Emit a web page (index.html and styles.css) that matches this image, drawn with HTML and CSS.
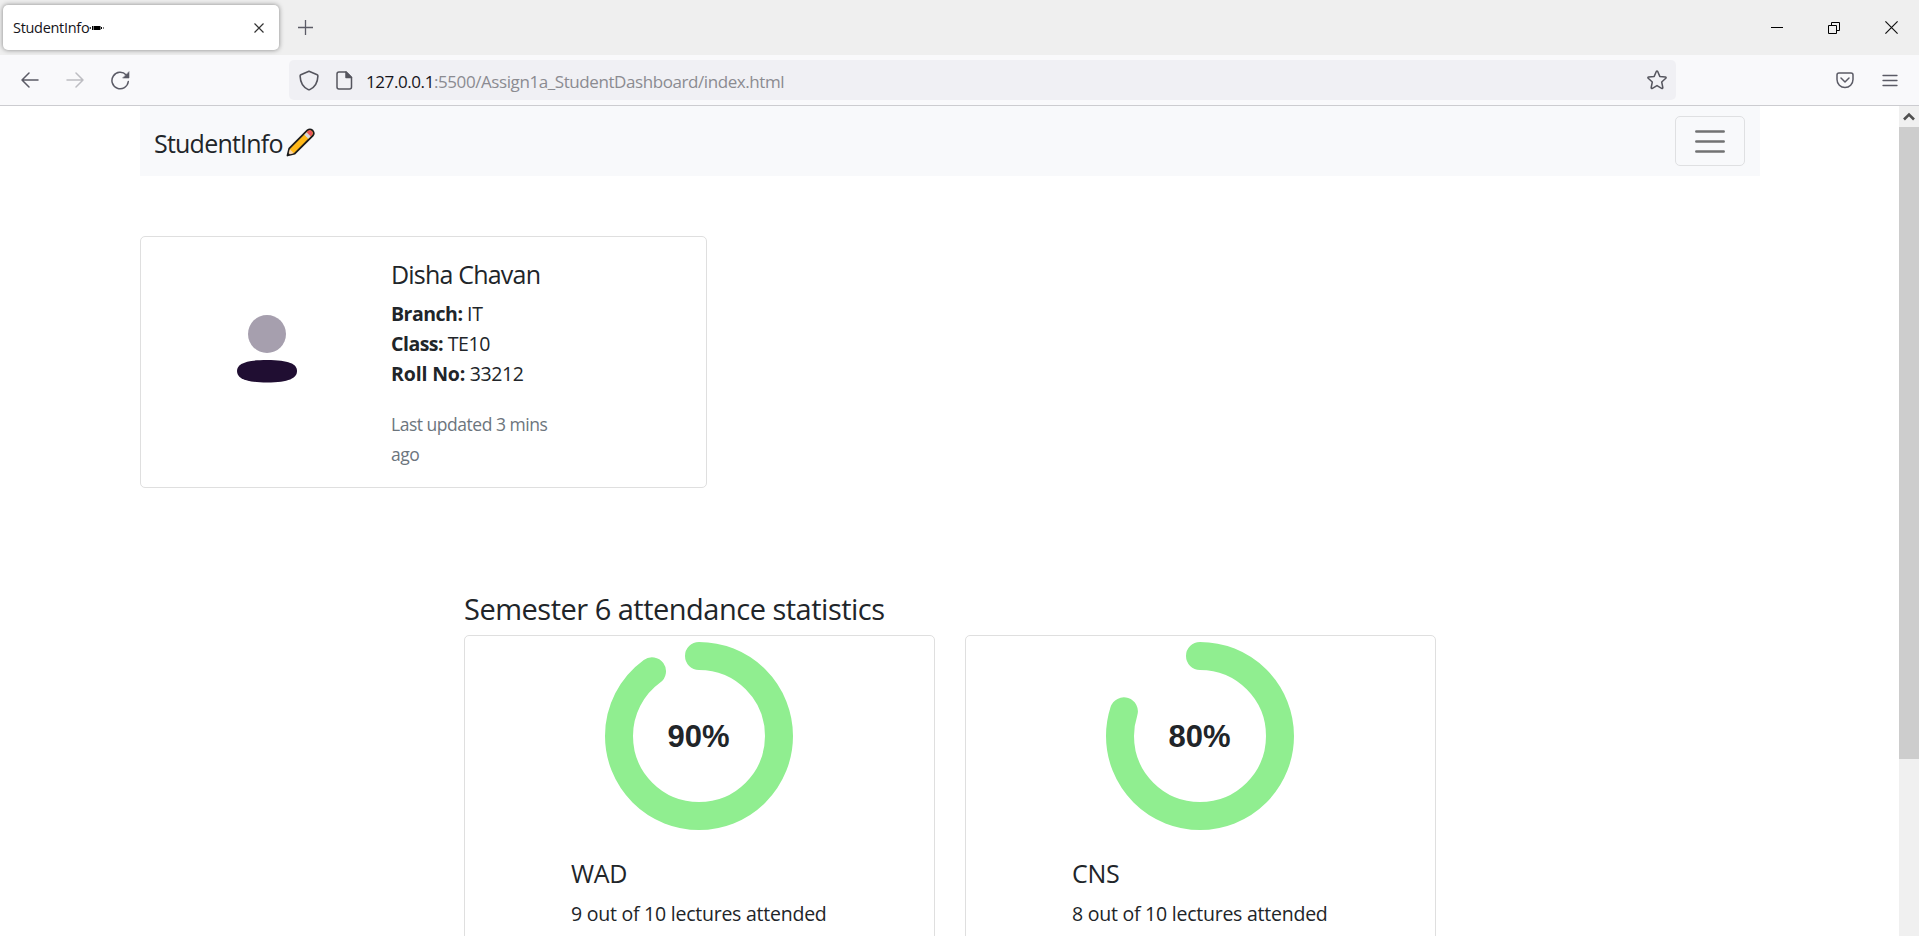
FILE: index.html
```html
<!DOCTYPE html>
<html lang="en">
<head>
<meta charset="utf-8">
<title>StudentInfo</title>
<link rel="stylesheet" href="styles.css">
</head>
<body>
<div class="tabstrip">
  <div class="tab">
    <span class="tab-title">StudentInfo</span>
    <svg class="tab-glyph" width="15" height="6" viewBox="0 0 15 6"><path d="M0 3l2-1v2zM3 1h1v4H3zM4.500 1h7v4h-7zM12 2h1v2h-1zM14 2.500h1v1h-1z"/></svg>
    <svg class="tab-close" width="10" height="10" viewBox="0 0 10 10"><path d="M.5.5l9 9M9.500.5l-9 9" stroke="#333" stroke-width="1.200"/></svg>
  </div>
  <svg class="newtab" width="15" height="15" viewBox="0 0 15 15"><path d="M7.500 0v15M0 7.500h15" stroke="#5b5b66" stroke-width="1.300"/></svg>
  <div class="window-buttons">
    <svg width="12" height="12" viewBox="0 0 12 12"><path d="M0 5.500h12" stroke="#000"/></svg>
    <svg width="12" height="12" viewBox="0 0 12 12" fill="none" stroke="#000"><path d="M.5 3.500h8v8h-8zM3.500 3V.5h8v8H9"/></svg>
    <svg width="13" height="13" viewBox="0 0 13 13"><path d="M.4.4l12.200 12.200M12.600.4L.4 12.600" stroke="#111" stroke-width="1.200"/></svg>
  </div>
</div>
<div class="toolbar">
  <div class="nav-icons">
    <svg width="18" height="16" viewBox="0 0 18 16" fill="none" stroke="#5b5b66" stroke-width="1.500" stroke-linecap="round" stroke-linejoin="round"><path d="M17 8H1M8 1L1 8l7 7"/></svg>
    <svg width="18" height="16" viewBox="0 0 18 16" fill="none" stroke="#bdbdc2" stroke-width="1.500" stroke-linecap="round" stroke-linejoin="round"><path d="M1 8h16M10 1l7 7-7 7"/></svg>
    <svg width="19" height="19" viewBox="0 0 19 19" fill="none" stroke="#5b5b66" stroke-width="1.500" stroke-linecap="round"><path d="M17.300 10.500A8.200 8.200 0 1 1 15.200 4"/><path d="M18 1v6h-6z" fill="#5b5b66" stroke-width=".6" stroke-linejoin="round"/></svg>
  </div>
  <div class="urlbar">
    <svg class="shield" width="20" height="21" viewBox="0 0 20 21" fill="none" stroke="#55555e" stroke-width="1.600" stroke-linejoin="round"><path d="M10 1.200L1.800 4.800q-.7.300-.7 1.200c.2 6 3 11.200 8.100 13.600q.8.300 1.600 0c5.100-2.400 7.900-7.600 8.100-13.600q0-.9-.7-1.200z"/></svg>
    <svg class="page" width="17" height="19" viewBox="0 0 17 19" fill="none" stroke="#55555e" stroke-width="1.500" stroke-linejoin="round"><path d="M10 1H3Q1 1 1 3v13q0 2 2 2h10.500q2 0 2-2V6.500z"/><path d="M10 1v5.500h5.500z" fill="#55555e"/></svg>
    <div class="url"><span class="host">127.0.0.1</span><span class="path">:5500/Assign1a_StudentDashboard/index.html</span></div>
    <svg class="star" width="20" height="20" viewBox="0 0 20 20" fill="none" stroke="#55555e" stroke-width="1.500" stroke-linejoin="round"><path d="M9.300 1.500q.7-1.200 1.400 0l2.100 4.900 5.500.6q1.300.3.500 1.300l-4.100 3.700 1.100 5.500q.1 1.400-1.200.8L10 15.600l-4.600 2.700q-1.300.6-1.200-.8l1.100-5.500-4.100-3.700q-.8-1 .5-1.300l5.500-.6z"/></svg>
  </div>
  <div class="tool-icons">
    <svg width="18" height="17" viewBox="0 0 18 17" fill="none" stroke="#5b5b66" stroke-width="1.500" stroke-linecap="round" stroke-linejoin="round"><path d="M3 1h12q2 0 2 2v4.500a8 8 0 0 1-16 0V3q0-2 2-2z"/><path d="M5 6l4 4 4-4"/></svg>
    <svg width="16" height="13" viewBox="0 0 16 13" stroke="#5b5b66" stroke-width="1.300" stroke-linecap="round"><path d="M1 1.500h14M1 6.500h14M1 11.500h14"/></svg>
  </div>
</div>
<div class="viewport">
  <main class="container">
    <nav class="navbar">
      <div class="brand"><span class="brand-text">StudentInfo</span>
        <svg width="29" height="29" viewBox="0 0 29 29"><path d="M1.500 27.500l1.800-7.200L21.500 2.200Q24 .3 26.600 2.500 28.800 5 26.900 7.500L8.700 25.700z" fill="#ffb91a" stroke="#1b1b1b" stroke-width="1.800" stroke-linejoin="round"/><path d="M2.300 26.700l1.500-5.500 4 4z" fill="#f5d3ae"/><path d="M1.500 27.500l.7-2.700 2 2z" fill="#1b1b1b"/><path d="M18.300 6.700l2.400-2.400 4 4-2.400 2.400z" fill="#d7d9dd"/><path d="M20.700 4.300L22 3q2-1.400 3.900.3 1.500 1.800.2 3.600l-1.400 1.400z" fill="#e8555f"/></svg>
      </div>
      <div class="toggler"><svg width="30" height="23" viewBox="0 0 30 23" stroke="#717273" stroke-width="2.500" stroke-linecap="round"><path d="M1.300 1.500h27.400M1.300 11.500h27.400M1.300 21.500h27.400"/></svg></div>
    </nav>
    <section class="profile">
      <div class="avatar"><svg width="60" height="68" viewBox="0 0 60 68"><circle cx="30" cy="19" r="19" fill="#a69fae"/><path d="M0 56C0 49 8 45 30 45s30 4 30 11-8 11.500-30 11.500S0 63 0 56z" fill="#200e32"/></svg></div>
      <div class="details">
        <h5 class="name">Disha Chavan</h5>
        <p class="facts"><b class="wide-key">Branch:</b> IT<br><b class="wide-key">Class:</b> TE10<br><b class="roll-key">Roll No:</b> 33212</p>
        <p class="updated">Last updated 3 mins<br>ago</p>
      </div>
    </section>
    <section class="stats">
      <h3 class="stats-title">Semester 6 attendance statistics</h3>
      <div class="cards">
        <article class="card">
          <svg class="ring" width="200" height="200" viewBox="0 0 200 200"><circle cx="100" cy="100" r="80" pathLength="100" stroke-dasharray="90 100" transform="rotate(-90 100 100)"/><text x="99.500" y="110.700">90%</text></svg>
          <div class="card-body"><h5 class="subject">WAD</h5><p class="attended">9 out of 10 lectures attended</p></div>
        </article>
        <article class="card">
          <svg class="ring" width="200" height="200" viewBox="0 0 200 200"><circle cx="100" cy="100" r="80" pathLength="100" stroke-dasharray="80 100" transform="rotate(-90 100 100)"/><text x="99.500" y="110.700">80%</text></svg>
          <div class="card-body"><h5 class="subject">CNS</h5><p class="attended">8 out of 10 lectures attended</p></div>
        </article>
      </div>
    </section>
  </main>
  <div class="scrollbar">
    <div class="scroll-up"><svg width="12" height="9" viewBox="0 0 12 9"><path d="M1 7.500l5-5 5 5" fill="none" stroke="#505050" stroke-width="2.600"/></svg></div>
    <div class="thumb"></div>
  </div>
</div>
</body>
</html>
```
FILE: styles.css
```css
* { box-sizing: border-box; }
html, body { margin: 0; height: 936px; overflow: hidden; }
body { display: flex; flex-direction: column; font-family: "Open Sans", "Noto Sans", sans-serif; font-size: 20px; line-height: 30px; color: #212529; background: #fff; }
svg { display: block; flex: none; }
h3, h5, p { margin: 0; font-weight: 400; white-space: nowrap; }

.tabstrip { flex: none; height: 55px; background: #efefef; display: flex; align-items: flex-start; padding: 5px 0 0 3px; }
.tab { width: 276px; height: 45px; background: #fff; border-radius: 5px; box-shadow: 0 0 5px rgba(0,0,0,.45); display: flex; align-items: center; padding: 0 15px 0 10px; }
.tab-title { font-size: 14.500px; color: #15141a; letter-spacing: -.3px; padding-top: 1px; }
.tab-close { margin-left: auto; }
.newtab { margin: 15px 0 0 19px; }
.window-buttons { margin: 16px 21px 0 auto; display: flex; align-items: center; gap: 45px; }

.toolbar { flex: none; height: 51px; background: #f9f9fb; border-bottom: 1px solid #ccccd0; display: flex; align-items: center; }
.nav-icons { width: 289px; display: flex; align-items: center; gap: 27px; padding-left: 21px; }
.urlbar { width: 1387px; height: 40px; background: #f0f0f4; border-radius: 5px; display: flex; align-items: center; padding: 0 9px 0 10px; }
.page { margin-left: 17px; }
.url { margin-left: 13px; font-size: 17px; white-space: nowrap; padding-top: 3px; letter-spacing: -.42px; }
.host { color: #15141a; }
.path { color: #8b8b91; }
.star { margin-left: auto; }
.tool-icons { margin-left: auto; display: flex; align-items: center; gap: 28px; padding-right: 21px; }

.viewport { flex: 1; min-height: 0; display: flex; justify-content: space-between; overflow: hidden; }
.container { width: 1620px; margin-left: 140px; }
.navbar { height: 70px; background: #f8f9fb; display: flex; align-items: center; justify-content: space-between; padding: 0 15px 0 14px; }
.brand { display: flex; align-items: center; font-size: 25px; padding-top: 3px; }
.brand-text { letter-spacing: -.78px; width: 132px; }
.toggler { width: 70px; height: 50px; border: 1px solid #dfe0e2; border-radius: 5px; display: grid; place-items: center; }

.profile { width: 567px; height: 252px; margin-top: 60px; border: 1px solid #dfdfdf; border-radius: 5px; display: flex; }
.avatar { width: 250px; padding: 78px 0 0 96px; }
.details { padding-top: 21px; }
.name { font-size: 25px; letter-spacing: -.8px; margin-bottom: 10px; margin-top: 1px; }
.facts { font-size: 19.500px; letter-spacing: -.4px; margin-bottom: 20px; }
.facts b { font-weight: 700; }
.wide-key { letter-spacing: -.5px; }
.roll-key { letter-spacing: -.15px; }
.updated { font-size: 17.500px; letter-spacing: -.48px; color: #6c757d; }

.stats { width: 972px; margin: 102px auto 0; }
.stats-title { font-size: 29px; letter-spacing: -.5px; line-height: 37px; margin-bottom: 8px; }
.cards { display: grid; grid-template-columns: 471px 471px; gap: 30px; }
.card { height: 400px; border: 1px solid #dfdfdf; border-radius: 5px; }
.ring { margin-left: 134px; }
.ring circle { fill: none; stroke: #90ee90; stroke-width: 28; stroke-linecap: round; }
.ring text { font: 700 31px "Liberation Sans", Arial, sans-serif; fill: #212529; text-anchor: middle; }
.card-body { padding: 22px 0 0 106px; }
.subject { font-size: 25px; letter-spacing: -.3px; margin-bottom: 11px; }
.attended { font-size: 19.500px; letter-spacing: -.24px; }

.scrollbar { width: 20px; background: #f0f0f0; }
.scroll-up { height: 21px; display: grid; place-items: center; }
.thumb { height: 632px; background: #cdcdcd; }
```
